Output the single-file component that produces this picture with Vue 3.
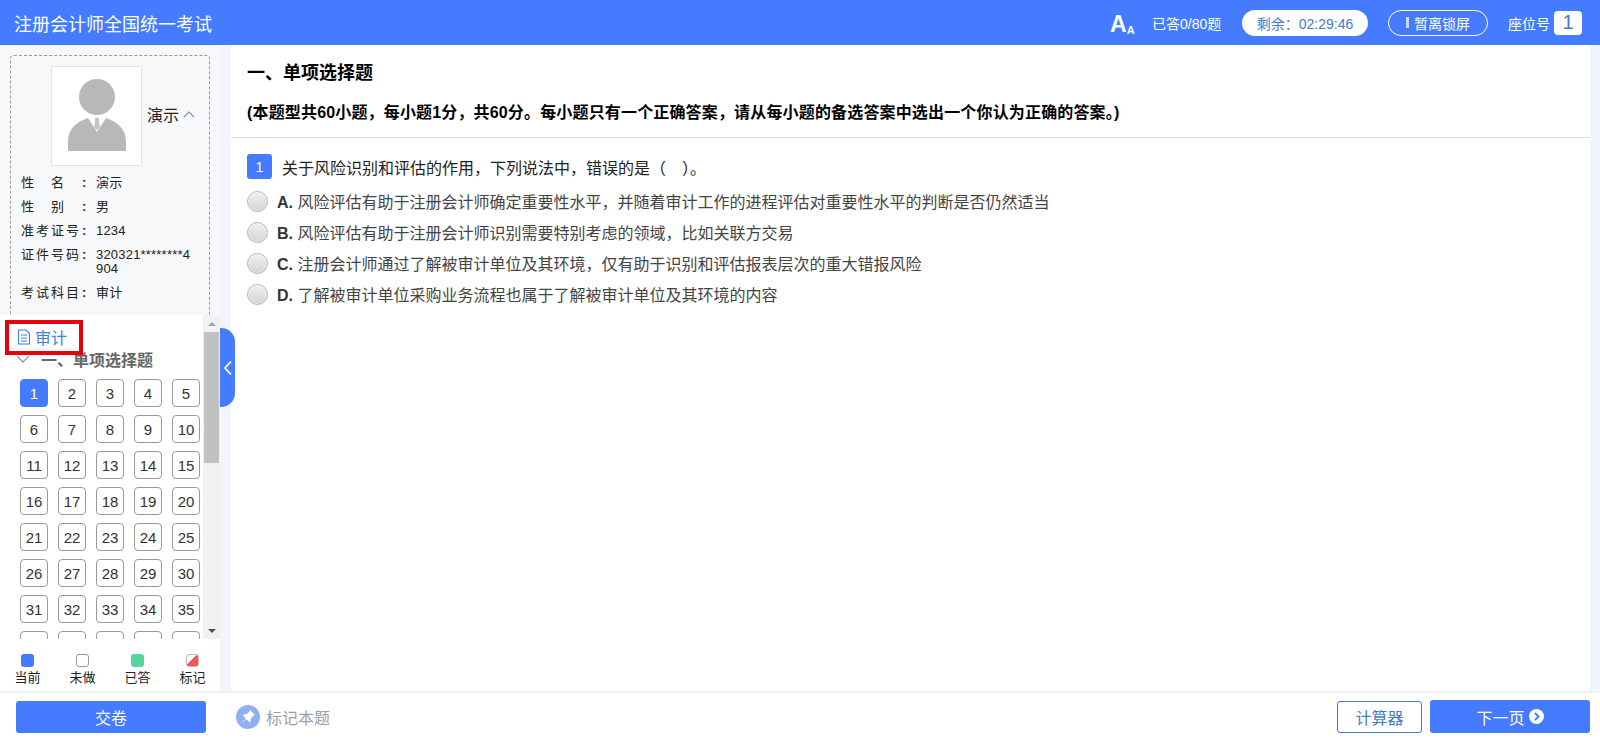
<script setup>
const numbers = Array.from({ length: 40 }, (_, i) => i + 1)
const options = [
  { key: 'A', text: '风险评估有助于注册会计师确定重要性水平，并随着审计工作的进程评估对重要性水平的判断是否仍然适当' },
  { key: 'B', text: '风险评估有助于注册会计师识别需要特别考虑的领域，比如关联方交易' },
  { key: 'C', text: '注册会计师通过了解被审计单位及其环境，仅有助于识别和评估报表层次的重大错报风险' },
  { key: 'D', text: '了解被审计单位采购业务流程也属于了解被审计单位及其环境的内容' }
]
const legend = [
  { label: '当前', cls: 'sw-current' },
  { label: '未做', cls: 'sw-todo' },
  { label: '已答', cls: 'sw-done' },
  { label: '标记', cls: 'sw-mark' }
]
</script>

<template>
  <div class="page">
    <header class="top">
      <div class="brand">注册会计师全国统一考试</div>
      <div class="top-right">
        <div class="font-size"><span class="a-big">A</span><span class="a-small">A</span></div>
        <div class="progress">已答0/80题</div>
        <div class="timer">剩余：02:29:46</div>
        <div class="lock"><i class="lock-bar"></i>暂离锁屏</div>
        <div class="seat-label">座位号</div>
        <div class="seat">1</div>
      </div>
    </header>

    <div class="body">
      <aside class="side">
        <div class="info-wrap">
          <div class="card">
            <div class="who">
              <div class="photo">
                <svg width="88" height="97" viewBox="0 2 88 97">
                  <circle cx="44" cy="31" r="18" fill="#b8b8b8" />
                  <path d="M15 85 V76 C15 63 23 56 35 52 L44 66 L53 52 C65 56 73 63 73 76 V85 Z" fill="#b8b8b8" />
                  <path d="M42 52 H46 V56 L47 61 L44 64 L41 61 L42 56 Z" fill="#c4c4c4" />
                </svg>
              </div>
              <span class="who-name">演示</span>
              <svg class="who-arrow" width="12" height="8" viewBox="0 0 12 8"><path d="M1 7 L6 2 L11 7" fill="none" stroke="#8a8f99" stroke-width="1.2" /></svg>
            </div>
            <div class="row"><span class="k spread"><b>性</b><b>名</b></span><span class="colon">:</span><span class="v">演示</span></div>
            <div class="row"><span class="k spread"><b>性</b><b>别</b></span><span class="colon">:</span><span class="v">男</span></div>
            <div class="row"><span class="k">准考证号</span><span class="colon">:</span><span class="v">1234</span></div>
            <div class="row"><span class="k">证件号码</span><span class="colon">:</span><span class="v">320321********4904</span></div>
            <div class="row"><span class="k">考试科目</span><span class="colon">:</span><span class="v">审计</span></div>
          </div>
        </div>

        <div class="nav">
          <div class="nav-list">
            <div class="subject">
              <svg width="14" height="16" viewBox="0 0 14 16"><path d="M1.5 1 H9 L12.5 4.5 V15 H1.5 Z M4 6 H10 M4 9 H10 M4 12 H10" fill="none" stroke="#3b7fe0" stroke-width="1.1" /></svg>
              <span>审计</span>
            </div>
            <div class="section">
              <svg width="14" height="8" viewBox="0 0 14 8"><path d="M1 1 L7 7 L13 1" fill="none" stroke="#8a8f99" stroke-width="1.1" /></svg>
              <span>一、单项选择题</span>
            </div>
            <div class="grid">
              <div v-for="n in numbers" :key="n" class="num" :class="{ current: n === 1 }">{{ n }}</div>
            </div>
            <div class="red-box"></div>
          </div>
          <div class="bar">
            <div class="arrow-up"></div>
            <div class="track"><div class="thumb"></div></div>
            <div class="arrow-down"></div>
          </div>
        </div>

        <div class="legend">
          <div v-for="l in legend" :key="l.label" class="leg">
            <i class="swatch" :class="l.cls"></i>
            <span>{{ l.label }}</span>
          </div>
        </div>
      </aside>

      <div class="gutter">
        <div class="toggle">
          <svg width="10" height="16" viewBox="0 0 10 16"><path d="M8 1.5 L2 8 L8 14.5" fill="none" stroke="#fff" stroke-width="1.8" /></svg>
        </div>
      </div>

      <main class="main">
        <div class="head">
          <h2 class="title">一、单项选择题</h2>
          <p class="desc">(本题型共60小题，每小题1分，共60分。每小题只有一个正确答案，请从每小题的备选答案中选出一个你认为正确的答案。)</p>
        </div>
        <div class="question">
          <div class="q-line"><span class="q-no">1</span><span class="q-text">关于风险识别和评估的作用，下列说法中，错误的是（　）。</span></div>
          <div v-for="o in options" :key="o.key" class="opt">
            <i class="radio"></i>
            <span class="opt-text"><b class="opt-key">{{ o.key }}.</b> {{ o.text }}</span>
          </div>
        </div>
      </main>

      <div class="right-strip"></div>
    </div>

    <footer class="foot">
      <button class="submit">交卷</button>
      <div class="mark">
        <svg width="24" height="24" viewBox="0 0 24 24">
          <circle cx="12" cy="12" r="12" fill="#8fb0f5" />
          <path d="M14 5 L19 10 L17.6 10.6 L14.8 13.4 L14.6 16.4 L13.4 17.2 L10.2 14 L6.4 17.8 L6 17.4 L9.8 13.6 L6.8 10.6 L7.6 9.4 L10.6 9.2 L13.4 6.4 Z" fill="#fff" />
        </svg>
        <span>标记本题</span>
      </div>
      <div class="foot-right">
        <button class="calc">计算器</button>
        <button class="next">下一页
          <svg width="15" height="15" viewBox="0 0 15 15"><circle cx="7.5" cy="7.5" r="7.5" fill="#fff" /><path d="M6 4 L9.5 7.5 L6 11" fill="none" stroke="#447bff" stroke-width="1.8" /></svg>
        </button>
      </div>
    </footer>
  </div>
</template>

<style>
html, body { margin: 0; padding: 0; background: #fff; }
</style>

<style scoped>
* { box-sizing: border-box; }
.page {
  width: 1600px;
  height: 742px;
  display: flex;
  flex-direction: column;
  overflow: hidden;
  font-family: "Liberation Sans", "Noto Sans CJK SC", sans-serif;
  color: #333;
}
.top {
  height: 45px;
  flex: none;
  background: #447bff;
  color: #fff;
  display: flex;
  align-items: center;
  justify-content: space-between;
  padding: 0 18px 0 14px;
}
.brand { font-size: 18px; }
.top-right { display: flex; align-items: center; }
.font-size { display: flex; align-items: flex-end; font-weight: 700; width: 25px; margin-right: -3px; line-height: 1; margin-top: 3px; }
.a-big { font-size: 23px; }
.a-small { font-size: 11px; }
.progress { font-size: 14px; margin-left: 20px; width: 70px; white-space: nowrap; }
.timer {
  margin-left: 20px; width: 126px; height: 26px; border-radius: 13px;
  background: #fff; color: #447bcc; font-size: 14px;
  display: flex; align-items: center; justify-content: center;
}
.lock {
  margin-left: 20px; width: 100px; height: 26px; border-radius: 13px;
  border: 1px solid #fff; font-size: 14px;
  display: flex; align-items: center; justify-content: center;
}
.lock-bar { width: 3px; height: 11px; background: #c9d8fb; margin-right: 5px; }
.seat-label { font-size: 14px; margin-left: 20px; width: 46px; white-space: nowrap; }
.seat {
  width: 28px; height: 24px; border-radius: 4px; background: #fff; color: #447bcc;
  font-size: 20px; display: flex; align-items: center; justify-content: center;
}

.body { flex: 1; display: flex; min-height: 0; background: #f2f6fc; }
.side { width: 220px; flex: none; display: flex; flex-direction: column; background: #f7f8fa; }
.info-wrap { height: 270px; flex: none; padding: 10px 10px 0; overflow: hidden; }
.card {
  height: 290px; border: 1px dashed #999; border-radius: 4px;
  padding: 10px 14px 0 10px; background: #f7f8fa;
}
.who { display: flex; align-items: center; margin-left: 30px; margin-bottom: 10px; }
.photo {
  width: 91px; height: 100px; background: #fff; border: 1px solid #e3e5ea;
  display: flex; align-items: center; justify-content: center; flex: none;
}
.who-name { font-size: 16px; color: #222; margin-left: 5px; margin-top: -5px; white-space: nowrap; flex: none; }
.who-arrow { margin-left: 4px; margin-top: -5px; flex: none; }
.row { display: flex; font-size: 13px; line-height: 14px; margin-bottom: 10px; color: #222; }
.k { width: 60px; flex: none; letter-spacing: 2px; white-space: nowrap; }
.spread { display: flex; justify-content: space-between; padding-right: 17px; }
.spread b { font-weight: 400; letter-spacing: 0; }
.colon { width: 15px; flex: none; padding-left: 1px; font-weight: 700; }
.v { flex: 1; word-break: break-all; letter-spacing: 0.2px; }

.nav { flex: none; height: 324px; display: flex; background: #fff; }
.nav-list { width: 203px; flex: none; overflow: hidden; position: relative; padding-left: 20px; }
.subject { display: flex; align-items: center; gap: 4px; color: #3b7fe0; font-size: 16px; height: 24px; margin-top: 10px; margin-left: -3px; }
.section {
  display: flex; align-items: center; gap: 11px; margin-left: -4px; margin-top: -2px;
  height: 24px; font-size: 16px; font-weight: 700; color: #666;
}
.grid { display: grid; grid-template-columns: repeat(5, 28px); column-gap: 10px; row-gap: 8px; margin-top: 8px; }
.num {
  width: 28px; height: 28px; border: 1px solid #999; border-radius: 4px;
  display: flex; align-items: center; justify-content: center;
  font-size: 15px; color: #333; background: #fff;
}
.num.current { background: #447bff; border-color: #447bff; color: #fff; }
.red-box { position: absolute; left: 5px; top: 5px; width: 78px; height: 35px; border: 4px solid #e8000f; }
.bar { width: 17px; flex: none; display: flex; flex-direction: column; background: #f1f1f1; }
.arrow-up, .arrow-down { height: 17px; flex: none; display: flex; align-items: center; justify-content: center; }
.arrow-up::before { content: ""; border: 4px solid transparent; border-top: 0; border-bottom: 4px solid #a3a3a3; }
.arrow-down::before { content: ""; border: 4px solid transparent; border-bottom: 0; border-top: 4px solid #505050; }
.track { flex: 1; padding: 0 1px; }
.thumb { height: 131px; background: #c1c1c1; }
.legend { flex: 1; display: grid; grid-template-columns: 55px 55px 55px 55px; background: #fff; padding-top: 15px; }
.leg { display: flex; flex-direction: column; align-items: center; font-size: 13px; color: #222; line-height: 17px; gap: 2px; }
.swatch { width: 13px; height: 13px; border-radius: 3px; display: block; }
.sw-current { background: #447bff; }
.sw-todo { background: #fff; border: 1px solid #999; }
.sw-done { background: #57d69b; }
.sw-mark { background: linear-gradient(135deg, #fff 42%, #f5515f 42%); border: 1px solid #bbb; }

.gutter { width: 11px; flex: none; position: relative; }
.toggle {
  position: absolute; left: 0; top: 283px; width: 15px; height: 79px; background: #447bff;
  border-radius: 0 14px 14px 0; display: flex; align-items: center; justify-content: center;
  z-index: 2;
}
.main { flex: 1; background: #fff; min-width: 0; }
.head { height: 93px; border-bottom: 1px solid #ddd; padding: 16px 16px 0; }
.title { margin: 0; font-size: 18px; font-weight: 700; color: #000; line-height: 24px; }
.desc { margin: 18px 0 0; font-size: 16px; font-weight: 700; color: #000; line-height: 20px; letter-spacing: 0.16px; }
.question { padding: 16px 16px 0; }
.q-line { display: flex; align-items: center; height: 25px; margin-bottom: 7px; }
.q-no {
  width: 25px; height: 25px; background: #447bff; color: #fff; border-radius: 3px;
  display: flex; align-items: center; justify-content: center; font-size: 15px;
}
.q-text { margin-left: 10px; font-size: 16px; color: #222; }
.opt { display: flex; align-items: center; height: 31px; font-size: 16px; color: #444; }
.opt-text { margin-top: -2px; }
.radio {
  width: 21px; height: 21px; border-radius: 50%; flex: none; margin-right: 9px;
  border: 1px solid #b5b5b5;
  background: linear-gradient(180deg, #f0f0f0, #d4d4d4);
  box-shadow: inset 0 0 2px #fff;
}
.opt-key { color: #333; }
.right-strip { width: 10px; flex: none; background: #f2f6fc; }

.foot {
  height: 51px; flex: none; background: #fff; border-top: 2px solid #f0f1f3;
  display: flex; align-items: center; padding: 0 10px 2px 16px;
}
button { font-family: inherit; cursor: pointer; padding: 0; }
.submit { width: 190px; height: 32px; background: #447bff; border: 0; border-radius: 3px; color: #fff; font-size: 16px; }
.mark { display: flex; align-items: center; gap: 6px; margin-left: 30px; color: #9aa0ad; font-size: 16px; }
.foot-right { margin-left: auto; display: flex; align-items: center; gap: 8px; }
.calc { width: 85px; height: 32px; background: #fff; border: 1px solid #447bcc; border-radius: 3px; color: #447bcc; font-size: 16px; }
.next {
  width: 160px; height: 33px; background: #447bff; border: 0; border-radius: 3px; color: #fff; font-size: 16px;
  display: flex; align-items: center; justify-content: center; gap: 4px;
}
</style>
